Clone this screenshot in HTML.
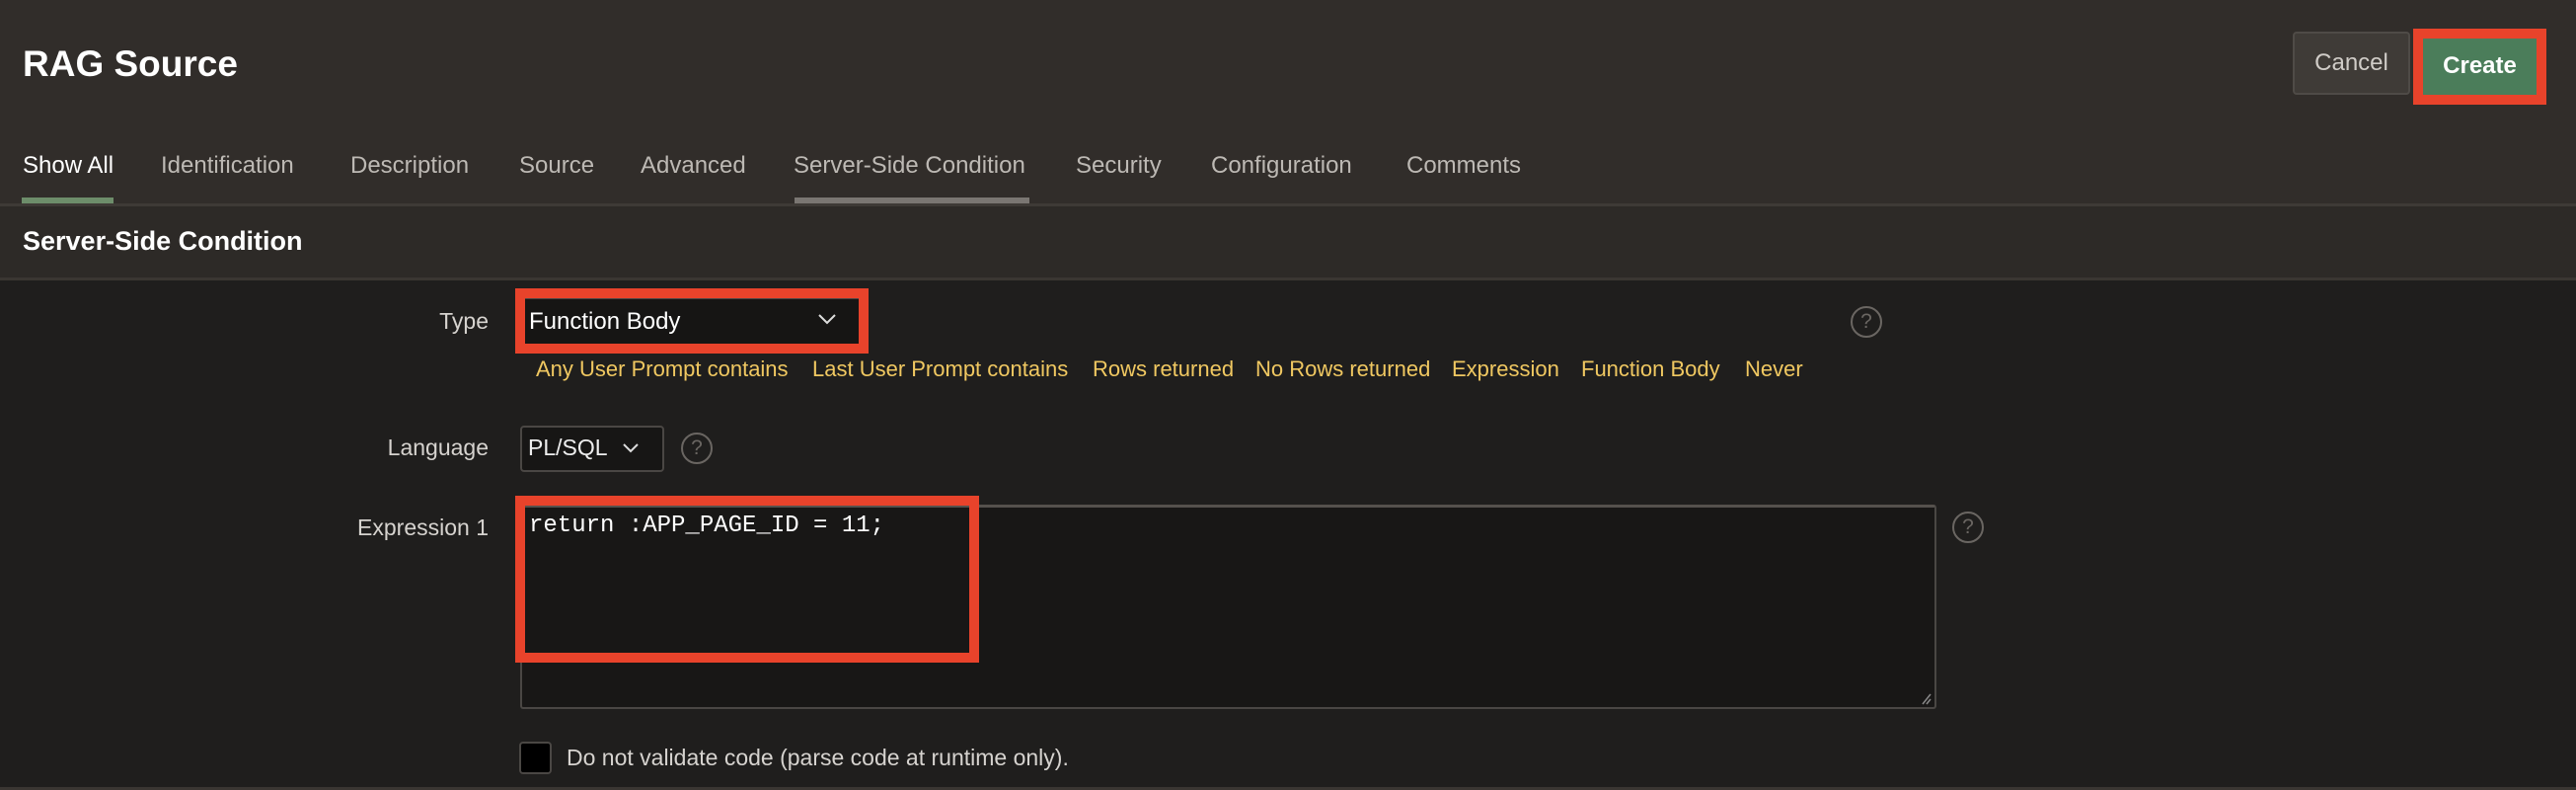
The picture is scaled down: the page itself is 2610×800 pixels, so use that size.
<!DOCTYPE html>
<html><head><meta charset="utf-8"><style>
*{margin:0;padding:0;box-sizing:border-box}
body{width:2610px;height:800px;background:#1f1e1d;font-family:"Liberation Sans",sans-serif;position:relative;overflow:hidden;color:#e8e6e3}
.a{position:absolute;white-space:nowrap}
.hdr{position:absolute;left:0;top:0;width:2610px;height:206px;background:#312d2a}
.sec{position:absolute;left:0;top:206px;width:2610px;height:78px;background:#2d2a27;border-top:3px solid #3e3a36;border-bottom:3px solid #3a3632}
.tab{position:absolute;top:154px;font-size:24px;color:#bdb9b4}
.lbl{position:absolute;font-size:23px;color:#d6d3cf;text-align:right;right:2115px}
.help{position:absolute;width:32px;height:32px;border:2px solid #6a6662;border-radius:50%;color:#6a6662;font-size:21px;text-align:center;line-height:28px}
.lnk{position:absolute;top:361px;font-size:22px;color:#f0c861}
.red{position:absolute;border:10px solid #e8432b}
</style></head><body>
<div class="hdr"></div>
<div class="a" style="left:23px;top:44px;font-size:37px;font-weight:bold;color:#fff">RAG Source</div>
<div class="a" style="left:2323px;top:32px;width:119px;height:64px;background:#3f3b37;border:2px solid #4f4b47;border-radius:4px;color:#d0ccc7;font-size:24px;text-align:center;line-height:60px">Cancel</div>
<div class="a" style="left:2445px;top:29px;width:135px;height:77px;background:#e8432b"></div>
<div class="a" style="left:2455px;top:39px;width:115px;height:57px;background:#4b7d5a;color:#fff;font-size:24px;font-weight:bold;text-align:center;line-height:55px">Create</div>
<div class="tab" style="left:23px;color:#fff">Show All</div>
<div class="tab" style="left:163px">Identification</div>
<div class="tab" style="left:355px">Description</div>
<div class="tab" style="left:526px">Source</div>
<div class="tab" style="left:649px">Advanced</div>
<div class="tab" style="left:804px">Server-Side Condition</div>
<div class="tab" style="left:1090px">Security</div>
<div class="tab" style="left:1227px">Configuration</div>
<div class="tab" style="left:1425px">Comments</div>
<div class="a" style="left:22px;top:200px;width:93px;height:6px;background:#6d8d6a"></div>
<div class="a" style="left:805px;top:200px;width:238px;height:6px;background:#7a7672"></div>
<div class="sec"></div>
<div class="a" style="left:23px;top:229px;font-size:27px;font-weight:bold;color:#fff">Server-Side Condition</div>

<div class="lbl" style="top:312px">Type</div>
<div class="a" style="left:527px;top:300px;width:350px;height:52px;background:#161514;border-top:3px solid #4a4744"></div>
<div class="red" style="left:522px;top:292px;width:358px;height:66px"></div>
<div class="a" style="left:536px;top:312px;font-size:24px;color:#fff">Function Body</div>
<svg class="a" style="left:828px;top:316px" width="20" height="14"><path d="M2 3 L10 11 L18 3" stroke="#ddd" stroke-width="2" fill="none"/></svg>
<div class="help" style="left:1875px;top:310px">?</div>
<div class="lnk" style="left:543px">Any User Prompt contains</div>
<div class="lnk" style="left:823px">Last User Prompt contains</div>
<div class="lnk" style="left:1107px">Rows returned</div>
<div class="lnk" style="left:1272px">No Rows returned</div>
<div class="lnk" style="left:1471px">Expression</div>
<div class="lnk" style="left:1602px">Function Body</div>
<div class="lnk" style="left:1768px">Never</div>

<div class="lbl" style="top:440px">Language</div>
<div class="a" style="left:527px;top:431px;width:146px;height:47px;background:#171615;border:2px solid #4a4744;border-radius:4px"></div>
<div class="a" style="left:535px;top:440px;font-size:23px;color:#eee">PL/SQL</div>
<svg class="a" style="left:630px;top:448px" width="18" height="12"><path d="M2 2 L9 9 L16 2" stroke="#ddd" stroke-width="2" fill="none"/></svg>
<div class="help" style="left:690px;top:438px">?</div>

<div class="lbl" style="top:521px">Expression 1</div>
<div class="a" style="left:527px;top:511px;width:1435px;height:207px;background:#181716;border:2px solid #4a4744;border-top:3px solid #55514d;border-radius:3px"></div>
<div class="red" style="left:522px;top:502px;width:470px;height:169px"></div>
<div class="a" style="left:536px;top:519px;font-family:'Liberation Mono',monospace;font-size:24px;color:#fff">return :APP_PAGE_ID = 11;</div>
<svg class="a" style="left:1946px;top:700px" width="12" height="14"><path d="M2 13 L10 3 M6 13 L10 8" stroke="#888" stroke-width="1.5"/></svg>
<div class="help" style="left:1978px;top:518px">?</div>

<div class="a" style="left:526px;top:751px;width:33px;height:33px;background:#000;border:2px solid #4a4744;border-radius:4px"></div>
<div class="a" style="left:574px;top:754px;font-size:23px;color:#d6d3cf">Do not validate code (parse code at runtime only).</div>
<div class="a" style="left:0;top:797px;width:2610px;height:3px;background:#3a3632"></div>
</body></html>
